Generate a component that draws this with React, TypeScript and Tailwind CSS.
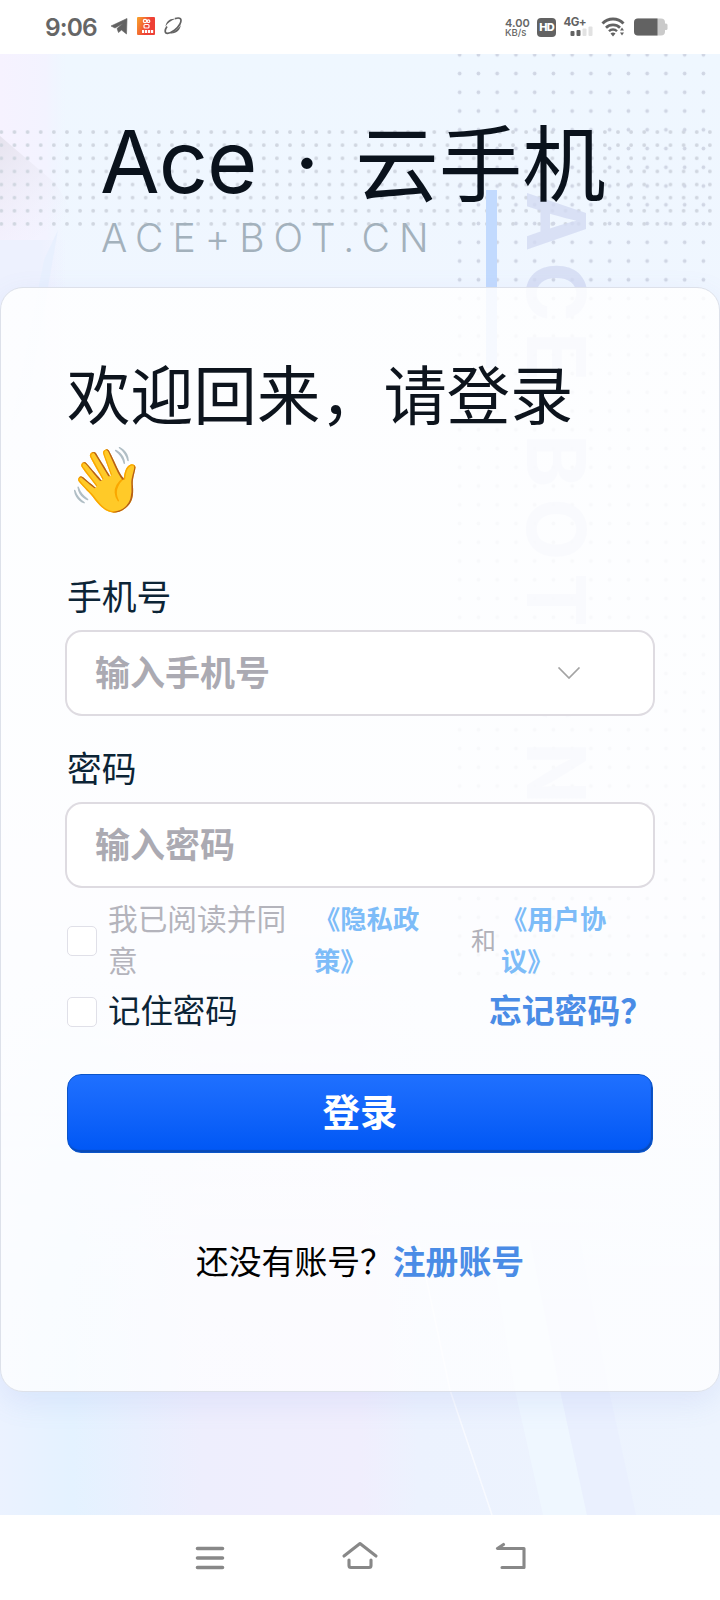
import { useState } from "react";

type FieldProps = {
  label: string;
  placeholder: string;
  type: string;
  value: string;
  onChange: (value: string) => void;
  dropdown?: boolean;
};

const Field = ({
  label,
  placeholder,
  type,
  value,
  onChange,
  dropdown,
}: FieldProps) => {
  return (
    <div className="-mx-px flex flex-col">
      <label className="ml-[2px] pt-px text-[34.8px] leading-[46px] text-[#0c2436]">
        {label}
      </label>
      <div className="mt-[12px] flex h-[86px] items-center rounded-[17px] border-2 border-[#dedbe1] bg-white pr-[72px] pl-[28px]">
        <input
          type={type}
          value={value}
          placeholder={placeholder}
          onChange={(e) => onChange(e.target.value)}
          className="min-w-0 flex-1 bg-transparent pb-[3px] text-[35px] font-bold text-[#333] outline-none placeholder:text-[#abaab2]"
        />
        {dropdown && (
          <svg
            className="h-[12px] w-[24px]"
            viewBox="0 0 24 12"
            fill="none"
            stroke="#a3a3a3"
            strokeWidth="1.7">
            <path d="M1.5 .5 12 11 22.5 .5" />
          </svg>
        )}
      </div>
    </div>
  );
};

const Checkbox = ({
  checked,
  onChange,
}: {
  checked: boolean;
  onChange: (checked: boolean) => void;
}) => (
  <input
    type="checkbox"
    checked={checked}
    onChange={(e) => onChange(e.target.checked)}
    className="size-[30px] shrink-0 cursor-pointer appearance-none rounded-[5px] border border-[#e0e0e8] bg-white checked:bg-[#1668ff]"
  />
);

const StatusBar = () => (
  <header className="flex h-[54px] items-center bg-white pl-[45px] text-[#666]">
    <span className="w-[52px] font-['Inter'] text-[24.5px] leading-[54px] font-semibold tracking-[-0.9px]">
      9:06
    </span>
    <svg className="ml-[13px] h-[20px] w-[74px]" viewBox="0 0 74 20">
      <path d="M1 9 17 1.500 16.500 17 11.500 13 8.500 15.500 7 11.500 13 6.500 5 11Z" fill="#626262" stroke="#626262" strokeWidth="0.600" />
      <defs>
        <linearGradient id="app" x1="0" y1="0" x2="1" y2="0.4">
          <stop offset="0" stopColor="#f9a62c" />
          <stop offset="0.7" stopColor="#ee4035" />
        </linearGradient>
      </defs>
      <rect x="27" y="0" width="18" height="18" rx="1" fill="url(#app)" />
      <circle cx="35" cy="4" r="1.700" fill="none" stroke="#fff" strokeWidth="1.200" />
      <circle cx="38.500" cy="4.200" r="1.300" fill="none" stroke="#fff" strokeWidth="1.200" />
      <rect x="34" y="7.500" width="5" height="3.500" rx="1" fill="none" stroke="#fff" strokeWidth="1.200" />
      <path d="M32 14.500h12" stroke="#fff" strokeWidth="3" strokeDasharray="2.200 .8" />
      <path d="M55.500 9.500C56 4.500 60 1 65.500 1.800 61 3.500 57.500 6 55.500 9.500Z" fill="#626262" />
      <path d="M70.700 8C70.500 13 66 17 60 16.300 65 14.500 69 11.500 70.700 8Z" fill="#626262" />
      <path d="M65 1.600c5-1.600 7.500 0 5 5.400-2.500 4.500-8 9-12.500 9.400-3 0-3-3.500-.5-7" fill="none" stroke="#626262" strokeWidth="1.700" />
    </svg>
    <div className="ml-auto flex w-[26px] flex-col font-['Inter'] font-semibold">
      <span className="text-[11px] leading-[10px]">4.00</span>
      <span className="text-[9.5px] leading-[9px] font-medium">KB/s</span>
    </div>
    <div className="ml-[6px] flex h-[19px] w-[19px] items-center justify-center rounded-[4px] bg-[#626262] font-['Inter'] text-[11px] leading-[19px] font-extrabold tracking-[-0.9px] text-white">
      HD
    </div>
    <svg className="ml-[7px] h-[22px] w-[32px] overflow-visible" viewBox="0 -1 32 22">
      <text x="0.500" y="9" fontFamily="Inter" fontSize="11.500" fontWeight="700" letterSpacing="-0.600" fill="#626262">
        4G+
      </text>
      <rect x="7.500" y="14" width="4" height="5" rx="1" fill="#626262" />
      <rect x="13.500" y="13" width="4" height="6" rx="1" fill="#626262" />
      <rect x="19.500" y="11.500" width="4" height="7.500" rx="1" fill="#e2e2e2" />
      <rect x="25.500" y="9.500" width="4" height="9.500" rx="1" fill="#e2e2e2" />
    </svg>
    <svg className="ml-[6px] h-[20px] w-[25px]" viewBox="0 0 25 20" fill="none" stroke="#626262">
      <path d="M1.500 6.500a14.500 14.500 0 0 1 21 0" strokeWidth="2.900" />
      <path d="M5 10.800a10 10 0 0 1 14 0" strokeWidth="2.700" />
      <path d="M8 14.300a5.500 5.500 0 0 1 8 0" strokeWidth="2.400" />
      <path d="m9.500 16.500 2.500 3 2.500-3a4 4 0 0 0-5 0Z" fill="#626262" stroke="none" />
      <path d="m19 13.500 2-3 2 3ZM19 15.500l2 3 2-3Z" fill="#626262" stroke="none" />
    </svg>
    <svg className="mr-[52px] ml-[8px] h-[18px] w-[34px]" viewBox="0 0 34 18">
      <rect x="0" y="0.500" width="31" height="17" rx="4" fill="#cacaca" />
      <rect x="30" y="5.500" width="3.500" height="6.500" rx="1.500" fill="#cacaca" />
      <path d="M4 .5h19.500v17H4a4 4 0 0 1-4-4v-9a4 4 0 0 1 4-4Z" fill="#626262" />
    </svg>
  </header>
);

// decorative layer behind the login card
const Backdrop = () => (
  <svg
    className="pointer-events-none absolute inset-0 h-full w-full"
    viewBox="0 54 720 1461"
    aria-hidden="true">
    <defs>
      <linearGradient id="sky" x1="0" y1="0" x2="0" y2="1">
        <stop offset="0" stopColor="#eff7ff" />
        <stop offset="0.6" stopColor="#f1f4ff" />
        <stop offset="1" stopColor="#ecf3ff" />
      </linearGradient>
      <linearGradient id="haze" x1="0" y1="0" x2="1" y2="0">
        <stop offset="0" stopColor="#f6f2ff" />
        <stop offset="0.7" stopColor="#f3f3ff" />
        <stop offset="1" stopColor="#f0f4ff" stopOpacity="0" />
      </linearGradient>
      <linearGradient id="lower" x1="0" y1="0" x2="1" y2="0">
        <stop offset="0" stopColor="#edf1fe" />
        <stop offset="0.6" stopColor="#edf1fe" />
        <stop offset="1" stopColor="#edf1fe" stopOpacity="0" />
      </linearGradient>
      <linearGradient id="shade" x1="0" y1="0" x2="0.6" y2="1">
        <stop offset="0" stopColor="#e6e3ee" />
        <stop offset="1" stopColor="#eeeffb" stopOpacity="0" />
      </linearGradient>
      <linearGradient id="floor" x1="0" y1="0" x2="1" y2="0">
        <stop offset="0" stopColor="#ebf2ff" />
        <stop offset="0.1" stopColor="#e4f2ff" />
        <stop offset="0.28" stopColor="#eeeefd" />
        <stop offset="0.5" stopColor="#f0eefd" />
        <stop offset="0.58" stopColor="#ecf2fe" />
        <stop offset="1" stopColor="#edf4fe" />
      </linearGradient>
      <linearGradient id="fade" x1="0" y1="0" x2="0" y2="1">
        <stop offset="0" stopColor="#fff" stopOpacity="0" />
        <stop offset="0.6" stopColor="#fff" />
      </linearGradient>
      <mask id="floorMask">
        <rect x="0" y="900" width="720" height="615" fill="url(#fade)" />
      </mask>
      <pattern id="band" x="-5.200" y="125.500" width="13.120" height="13.120" patternUnits="userSpaceOnUse">
        <circle cx="6.560" cy="6.560" r="1.900" fill="#d0d6e0" />
      </pattern>
      <pattern id="column" x="450.300" y="45.400" width="18.750" height="18.750" patternUnits="userSpaceOnUse">
        <circle cx="9.370" cy="9.370" r="1.900" fill="#d0d6e4" />
      </pattern>
    </defs>
    <rect x="0" y="54" width="720" height="1461" fill="url(#sky)" />
    <rect x="0" y="54" width="66" height="400" fill="url(#haze)" />
    <rect x="0" y="240" width="66" height="220" fill="url(#lower)" />
    <path d="M0 136 56 184 74 215 30 240H0Z" fill="url(#shade)" />
    <path d="M58 230 30 390 10 430 44 260Z" fill="#e8f0fe" />
    <rect x="0" y="900" width="720" height="615" fill="url(#floor)" mask="url(#floorMask)" />
    <path d="M418 1240 450 1390 492 1515" fill="none" stroke="#f8faff" strokeWidth="1.500" />
    <path d="M490 1240 515 1390 543 1515H587L560 1390 530 1240Z" fill="#eff7ff" />
    <path d="M530 1240 560 1390 587 1515H636L609 1390 580 1240Z" fill="#eaf0fe" />
    <rect x="0" y="125.500" width="716" height="104.960" fill="url(#band)" />
    <rect x="450.300" y="54" width="262.500" height="928" fill="url(#column)" />
    <rect x="486" y="190" width="11" height="178" fill="#c2dafe" />
    <text
      transform="translate(527 0) rotate(90)"
      x="191 262 332 402 434 498 573 637 661 742"
      y="0"
      fontFamily="Inter"
      fontSize="81"
      fontWeight="700"
      fill="#d3dbf2"
      fillOpacity="0.8">
      ACE BOT.CN
    </text>
  </svg>
);

export default function App() {
  const [phone, setPhone] = useState("");
  const [password, setPassword] = useState("");
  const [agreed, setAgreed] = useState(false);
  const [remember, setRemember] = useState(false);

  return (
    <div className="flex h-[1600px] w-[720px] flex-col overflow-hidden bg-white font-['Noto_Sans_CJK_SC',sans-serif]">
      <StatusBar />
      <main className="relative h-[1461px]">
        <Backdrop />
        <div className="relative flex h-full flex-col">
          <div className="h-[233px] pt-[48px] pl-[100px]">
            <h1 className="flex h-[114px] items-baseline leading-[110px] text-[#0a121c]">
              <span className="font-['Inter'] text-[86.5px] tracking-[-1px]">Ace</span>
              <span className="ml-[38px] font-['Inter'] text-[86px]">·</span>
              <span className="relative top-[2px] ml-[36px] text-[83.5px]">云手机</span>
            </h1>
            <p className="ml-px font-['Inter'] text-[39px] leading-[44px] font-light tracking-[9px] text-[#a3b1bc]">
              ACE+BOT.CN
            </p>
          </div>

          <section className="flex h-[1105px] flex-col rounded-[23px] border border-[#dde1ea] bg-linear-to-b from-white/85 via-white/85 to-white/75 px-[65px] pt-[62px] shadow-[0_10px_30px_rgba(110,130,220,0.12)]">
            <h2 className="ml-px text-[63.3px] leading-[84px] text-[#0d141d]">
              欢迎回来，请登录
              <br />
              <span className="relative -top-px">👋</span>
            </h2>
            <form className="mt-[53px] flex flex-col" onSubmit={(e) => e.preventDefault()}>
              <Field
                label="手机号"
                placeholder="输入手机号"
                type="tel"
                value={phone}
                onChange={setPhone}
                dropdown
              />
              <div className="h-[27px]" />
              <Field
                label="密码"
                placeholder="输入密码"
                type="password"
                value={password}
                onChange={setPassword}
              />
              <div className="mt-[11px] ml-px flex h-[84px] items-center">
                <Checkbox checked={agreed} onChange={setAgreed} />
                <p className="ml-[11px] w-[206px] pb-[5px] text-[29.7px] leading-[42px] text-[#b4b4bc]">
                  我已阅读并同
                  <br />意
                </p>
                <a className="w-[157px] pb-[4px] text-[26.3px] leading-[42px] font-bold text-[#7dbcf8]">
                  《隐私政
                  <br />
                  策》
                </a>
                <span className="w-[30px] pb-[3px] text-[25px] text-[#b1b1b9]">和</span>
                <a className="pb-[4px] text-[26.3px] leading-[42px] font-bold text-[#7dbcf8]">
                  《用户协
                  <br />
                  议》
                </a>
              </div>
              <div className="mx-px mt-[5px] flex h-[48px] items-center">
                <Checkbox checked={remember} onChange={setRemember} />
                <span className="ml-[11px] pb-[6px] text-[32.4px] text-[#0c2436]">记住密码</span>
                <a className="ml-auto pb-[6px] text-[32.8px] font-bold text-[#4a8ce6]">忘记密码？</a>
              </div>
              <button
                type="submit"
                className="mx-px mt-[38px] h-[79px] rounded-[14px] border border-[#0b55c9] bg-linear-to-b from-[#1f70ff] to-[#0057f5] pb-[6px] text-[37.5px] font-bold text-white shadow-[inset_-1px_-2px_1px_#0a4bb5]">
                登录
              </button>
            </form>
            <p className="mt-[82px] flex justify-center text-[32.8px] leading-[50px] text-black">
              还没有账号？
              <a className="font-bold text-[#4a8ce6]">注册账号</a>
            </p>
          </section>
        </div>
      </main>
      <nav className="flex h-[85px] bg-white">
        <svg className="h-[85px] w-[720px]" viewBox="0 1515 720 85" fill="none" stroke="#888" strokeWidth="3.600" strokeLinecap="round" strokeLinejoin="round">
          <path d="M197.500 1548.500h25M197.500 1558h25M197.500 1567.500h25" />
          <path d="m344 1556 16-12.500 16 12.500M349 1560v5.500q0 2 2 2h18q2 0 2-2v-5.500" strokeWidth="3.100" />
          <path d="M503.500 1544.500 497.500 1548.500h26.500v19h-22" strokeWidth="3.100" />
        </svg>
      </nav>
    </div>
  );
}
